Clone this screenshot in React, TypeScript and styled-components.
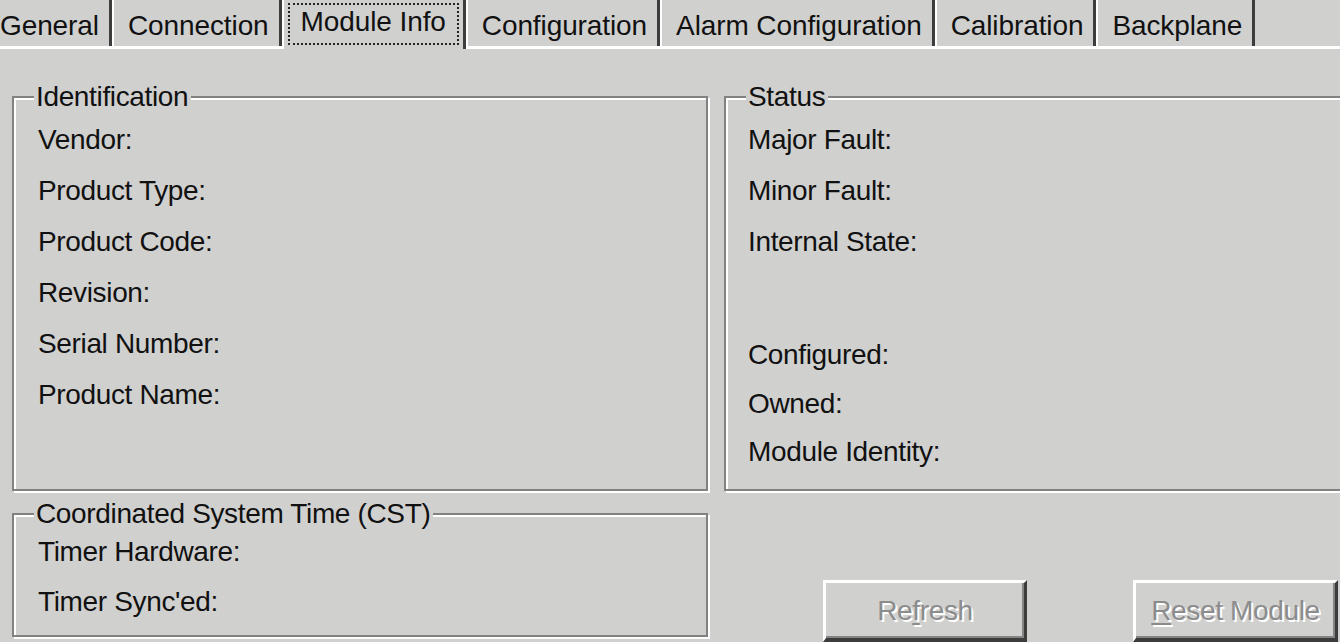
import React from 'react';
import styled, { createGlobalStyle } from 'styled-components';

const face = '#d0d0cf';

const GlobalStyle = createGlobalStyle`
  html, body {
    margin: 0;
    padding: 0;
    background: ${face};
  }
  body {
    font-family: "Liberation Sans", Arial, sans-serif;
  }
`;

const Dialog = styled.div`
  width: 1340px;
  height: 642px;
  overflow: hidden;
  background: ${face};
  color: #111;
  font-size: 28px;
  line-height: 32px;
  letter-spacing: -0.35px;
`;

const TabStrip = styled.div`
  display: flex;
  align-items: flex-end;
  height: 46px;
  border-bottom: 3px solid #fff;
  margin-left: -16px;
  letter-spacing: -0.1px;
`;

const Tab = styled.div<{ $active?: boolean }>`
  box-sizing: border-box;
  display: flex;
  align-items: ${p => (p.$active ? 'flex-start' : 'center')};
  position: relative;
  height: ${p => (p.$active ? '52px' : '46px')};
  margin-bottom: ${p => (p.$active ? '-3px' : '0')};
  padding: ${p => (p.$active ? '6px 4px 0 4px' : '6px 10px 0 14px')};
  border-left: 2px solid #fff;
  border-right: 3px solid #3c3c3c;
  background: ${face};
  white-space: nowrap;
  z-index: ${p => (p.$active ? 1 : 0)};
`;

const Focus = styled.span`
  display: block;
  padding: 1px 11px 5px 11px;
  border: 2px dotted #222;
`;

const Body = styled.div`
  display: grid;
  grid-template-columns: 696px 622px;
  grid-template-rows: 395px 124px;
  column-gap: 16px;
  row-gap: 22px;
  padding: 47px 0 0 12px;
`;

const Group = styled.div<{ $pt: number; $pl?: number }>`
  position: relative;
  box-sizing: border-box;
  border: 2px solid #828282;
  box-shadow: inset 2px 2px 0 #fff, 2px 2px 0 #fff;
  padding: ${p => p.$pt}px 0 0 ${p => p.$pl ?? 24}px;
`;

const Title = styled.span`
  position: absolute;
  top: -17px;
  left: 20px;
  padding: 0 3px 0 2px;
  background: ${face};
  white-space: nowrap;
`;

const Row = styled.div<{ $mt?: number; $h?: number }>`
  height: ${p => p.$h ?? 51}px;
  line-height: 51px;
  margin-top: ${p => p.$mt ?? 0}px;
  white-space: nowrap;
`;

const ButtonArea = styled.div`
  display: flex;
  align-items: flex-start;
  gap: 106px;
  padding: 67px 0 0 99px;
`;

const Button = styled.div<{ $w: number }>`
  box-sizing: border-box;
  display: flex;
  align-items: center;
  justify-content: center;
  flex: none;
  width: ${p => p.$w}px;
  height: 62px;
  border-top: 3px solid #fff;
  border-left: 3px solid #fff;
  border-right: 3px solid #3c3c3c;
  border-bottom: 4px solid #3c3c3c;
  box-shadow: inset -2px -2px 0 #858585;
  color: #8c8c8c;
  text-shadow: 2px 2px 0 #fff;
  white-space: nowrap;
`;

const Key = styled.span`
  text-decoration: underline;
  text-underline-offset: 3px;
`;

const tabs = ['General', 'Connection', 'Module Info', 'Configuration', 'Alarm Configuration', 'Calibration', 'Backplane'];
const activeTab = 'Module Info';

const identification = ['Vendor:', 'Product Type:', 'Product Code:', 'Revision:', 'Serial Number:', 'Product Name:'];

export default function App() {
  return (
    <>
      <GlobalStyle />
      <Dialog>
        <TabStrip>
          {tabs.map(t =>
            t === activeTab ? (
              <Tab key={t} $active>
                <Focus>{t}</Focus>
              </Tab>
            ) : (
              <Tab key={t}>{t}</Tab>
            )
          )}
        </TabStrip>
        <Body>
          <Group $pt={16}>
            <Title>Identification</Title>
            {identification.map(l => (
              <Row key={l}>{l}</Row>
            ))}
          </Group>
          <Group $pt={16} $pl={22}>
            <Title>Status</Title>
            <Row>Major Fault:</Row>
            <Row>Minor Fault:</Row>
            <Row>Internal State:</Row>
            <Row $mt={62}>Configured:</Row>
            <Row $mt={-2} $h={48}>Owned:</Row>
            <Row $h={48}>Module Identity:</Row>
          </Group>
          <Group $pt={11}>
            <Title>Coordinated System Time (CST)</Title>
            <Row $h={50}>Timer Hardware:</Row>
            <Row>Timer Sync'ed:</Row>
          </Group>
          <ButtonArea>
            <Button $w={204}>
              Re<Key>f</Key>resh
            </Button>
            <Button $w={205}>
              <Key>R</Key>eset Module
            </Button>
          </ButtonArea>
        </Body>
      </Dialog>
    </>
  );
}
